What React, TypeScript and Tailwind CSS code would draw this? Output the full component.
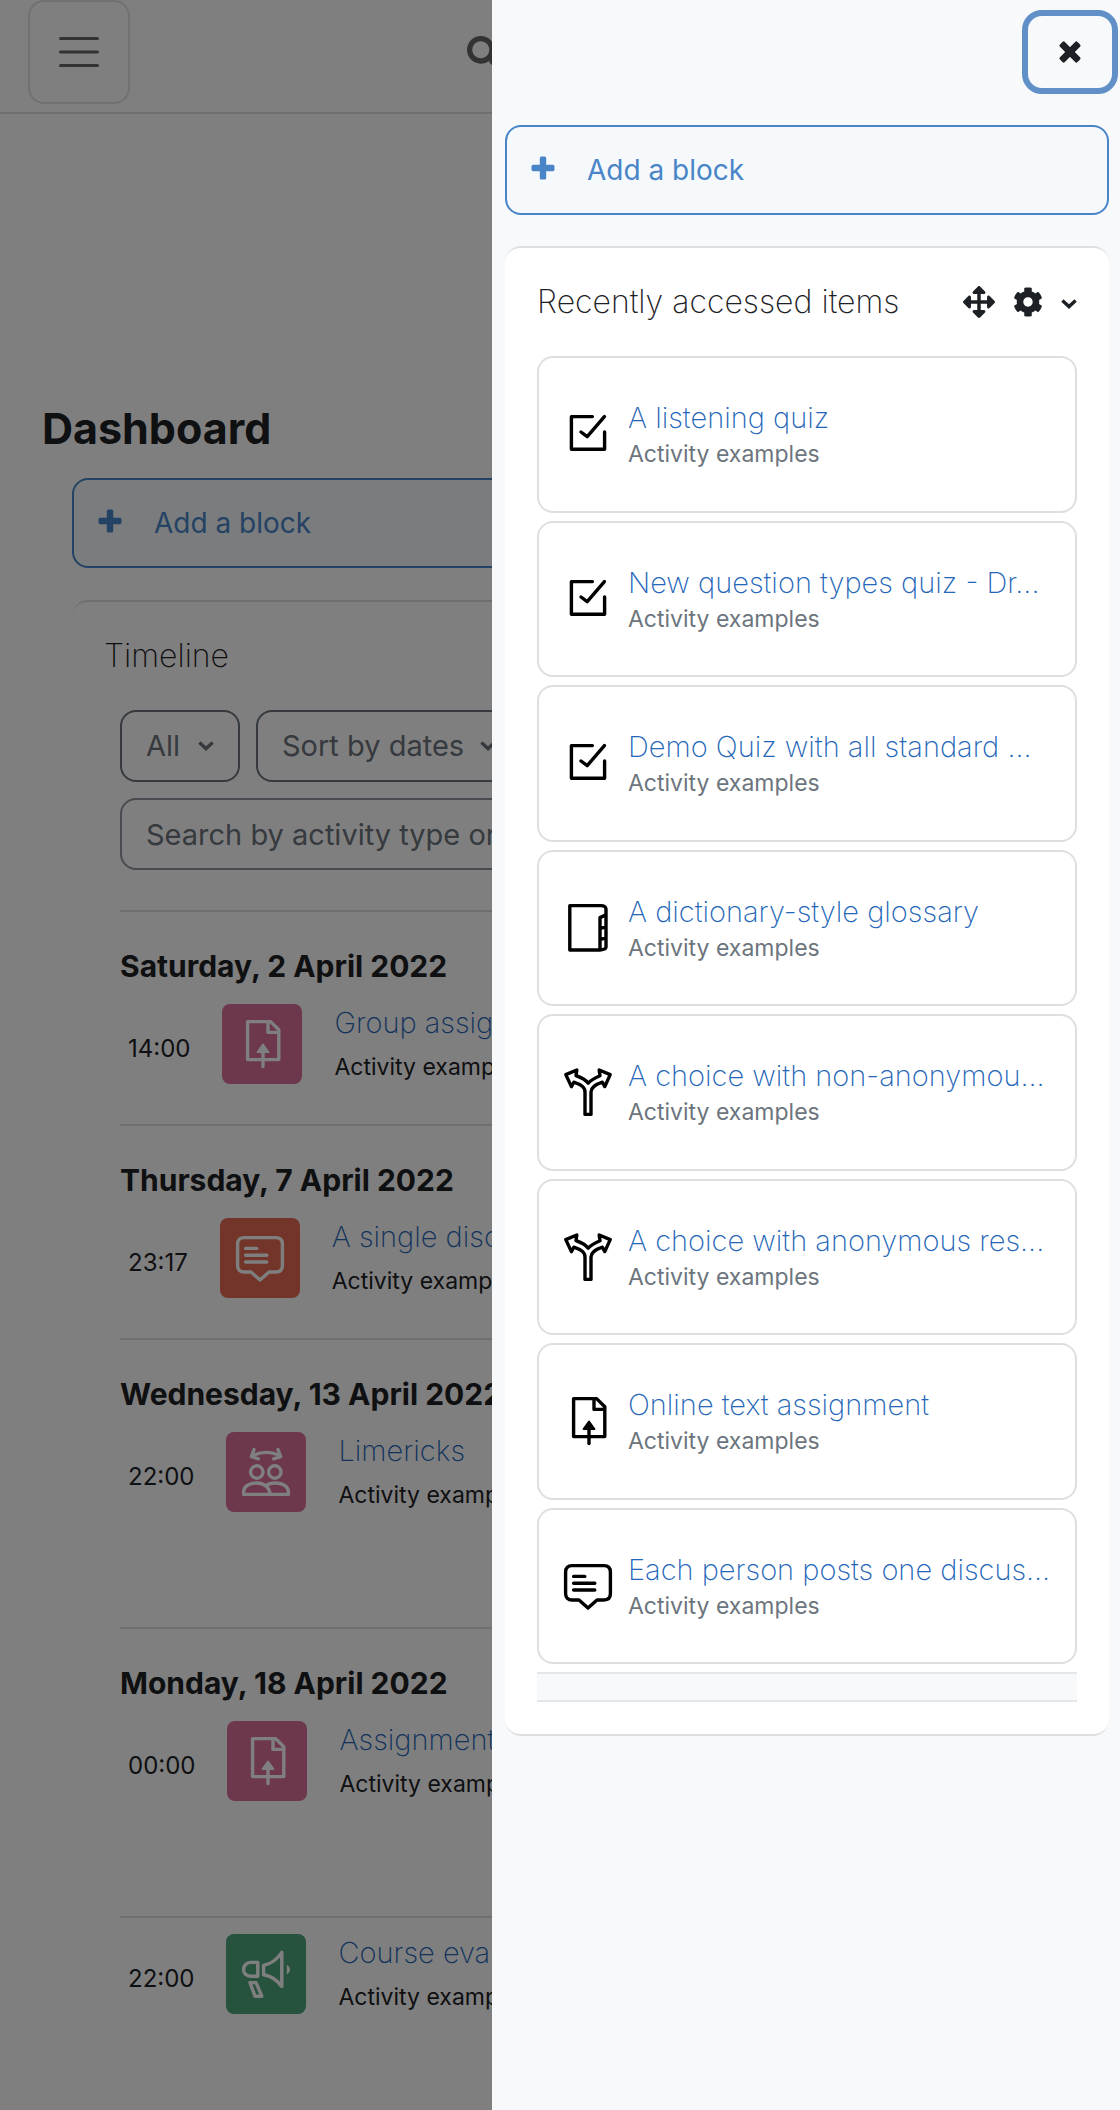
import type { ReactNode } from "react"
import { FaArrowsAlt, FaCog, FaSearch } from "react-icons/fa"

type IconName = "quiz" | "glossary" | "choice" | "assign" | "forum" | "workshop" | "feedback"

type TimelineEvent = {
    date?: string
    time: string
    icon: IconName
    tile: string
    name: string
    action?: boolean
}

const items: { icon: IconName, name: string }[] = [
    { icon: "quiz", name: "A listening quiz" },
    { icon: "quiz", name: "New question types quiz - Dr..." },
    { icon: "quiz", name: "Demo Quiz with all standard ..." },
    { icon: "glossary", name: "A dictionary-style glossary" },
    { icon: "choice", name: "A choice with non-anonymou..." },
    { icon: "choice", name: "A choice with anonymous res..." },
    { icon: "assign", name: "Online text assignment" },
    { icon: "forum", name: "Each person posts one discus..." },
]

const events: TimelineEvent[] = [
    { date: "Saturday, 2 April 2022", time: "14:00", icon: "assign", tile: "bg-[#da6e9c]", name: "Group assignment" },
    { date: "Thursday, 7 April 2022", time: "23:17", icon: "forum", tile: "bg-[#e66a54]", name: "A single discussion" },
    { date: "Wednesday, 13 April 2022", time: "22:00", icon: "workshop", tile: "bg-[#da6e9c]", name: "Limericks", action: true },
    { date: "Monday, 18 April 2022", time: "00:00", icon: "assign", tile: "bg-[#da6e9c]", name: "Assignment", action: true },
    { time: "22:00", icon: "feedback", tile: "bg-[#4ea47c]", name: "Course evaluation" },
]

const shapes: Record<IconName, ReactNode> = {
    quiz: (
        <path d="M14.2 3.3H3.7V19.6H20.3V11M8.5 11L11.6 13.3L20.2 3.3" />
    ),
    glossary: (
        <path d="M18 23H2.9V.8H18.5C20 .8 21 1.6 21 2.6V5.4L18 6.8V23C20 22.8 21 22.3 21 21.5V5.4M18 12.2L21 11.6M18 17.7L21 17.1" />
    ),
    choice: (
        <path d="M10.5 23.2V12C10.5 9.8 9 8.6 4.9 7.1L3.7 9.3L.9 3.3L6.4 1L6 3.8C9 4.9 11 6 12.1 7.6C13.5 6 15.5 5 18 3.9L17.6 1L23.1 3.3L20.4 9.3L19.2 7.1C15.2 8.6 13.6 9.8 13.5 12V23.2Z" />
    ),
    assign: (
        <>
            <path d="M4.8 .8H16.3L20.4 4.9V19.8H4.8ZM15 .8V6.2H20.4" />
            <path d="M12.5 12.3L15.2 16H9.8Z" fill="currentColor" strokeWidth="1" />
            <path d="M12.5 15V23.3" />
        </>
    ),
    forum: (
        <path d="M4 1.8H20C22 1.8 23.2 3 23.2 5V15.8C23.2 17.8 22 19 20 19H16.5L12 23L7.5 19H4C2 19 .8 17.8 .8 15.8V5C.8 3 2 1.8 4 1.8ZM4.8 7.2H10.4M4.8 10.6H15.4M4.8 14H15.4" />
    ),
    workshop: (
        <>
            <path d="M6 .8L4.7 4.3L8.2 5.4M4.9 4.2C9 1.5 15 1.5 19.1 4.2M18 .8L19.3 4.3L15.8 5.4" />
            <circle cx="7.4" cy="12" r="3.1" />
            <circle cx="16.4" cy="12" r="3.1" />
            <path d="M.8 23.2V22C.8 19.2 3.6 17.5 7.3 17.5S13.8 19.6 14 23.2ZM12 18.8C13.2 17.9 14.8 17.5 16.6 17.5C20.4 17.5 23.2 19.2 23.2 22V23.2H14" />
        </>
    ),
    feedback: (
        <>
            <path d="M7.9 6.2V13.1H4.3C2.2 13.1 .8 11.6 .8 9.7S2.2 6.2 4.3 6.2ZM10.8 7.7C14.5 7 17.8 4.4 19.9 1.2V18.3C17.8 15.4 14.5 13 10.8 12.4ZM4 16.3H7L9.9 23.1H6.5Z" />
            <path d="M22.4 7.2C23.5 8.2 24 9 24 9.8S23.5 11.4 22.4 12.3Z" fill="currentColor" stroke="none" />
        </>
    ),
}

function ActivityIcon({ name }: { name: IconName }) {
    return (
        <svg viewBox="0 0 24 24" className="size-12 shrink-0 overflow-visible" fill="none" stroke="currentColor" strokeWidth="1.7" strokeLinecap="round" strokeLinejoin="round" aria-hidden="true">
            {shapes[name]}
        </svg>
    )
}

function PlusIcon({ className }: { className: string }) {
    return (
        <svg viewBox="0 0 24 24" className={className} fill="currentColor" aria-hidden="true">
            <rect x=".5" y="8.8" width="23" height="6.4" rx="1.6" />
            <rect x="8.8" y=".5" width="6.4" height="23" rx="1.6" />
        </svg>
    )
}

function Chevron() {
    return (
        <svg viewBox="0 0 16 10" className="h-[10px] w-4 shrink-0" fill="none" stroke="currentColor" strokeWidth="3.4" aria-hidden="true">
            <path d="M1.4 1.6L8 7.6L14.6 1.6" />
        </svg>
    )
}

function AddBlock() {
    return (
        <a href="#" className="flex h-[90px] items-center gap-8 rounded-2xl border-2 border-[#4985c7] bg-[#f5f9fc] px-6 text-[28px] text-[#4985c7]">
            <PlusIcon className="-mt-1 size-6" />
            Add a block
        </a>
    )
}

function EventRow({ event }: { event: TimelineEvent }) {
    return (
        <div className={event.action ? "border-t-2 border-[#dedfe0] pb-[115px]" : "border-t-2 border-[#dedfe0] pb-10"}>
            {event.date
                ? <h3 className="pt-8 pb-4 text-[30px] leading-[44px] font-bold">{event.date}</h3>
                : <div className="h-4" />}
            <div className="flex h-20 items-center pl-2">
                <time className="pt-[10px] pr-8 text-[24px]">{event.time}</time>
                <span className={"flex size-20 shrink-0 items-center justify-center rounded-lg text-white " + event.tile}>
                    <ActivityIcon name={event.icon} />
                </span>
                <div className="flex flex-col gap-1 pt-[2px] pl-8 whitespace-nowrap">
                    <a href="#" className="text-[29px] leading-10 font-extralight text-[#2466b8]">{event.name}</a>
                    <span className="text-[23px] leading-10">Activity examples</span>
                </div>
            </div>
        </div>
    )
}

function DashboardPage() {
    return (
        <div className="flex min-h-screen flex-col bg-white">
            <header className="flex h-[114px] items-start justify-between border-b-2 border-[#dee0e2] px-7">
                <button aria-label="Side panel" className="flex h-[104px] w-[102px] items-center justify-center rounded-2xl border-2 border-[#e2e2e2] text-[#666]">
                    <svg viewBox="0 0 40 30" className="h-[30px] w-10" stroke="currentColor" strokeWidth="3" strokeLinecap="round" aria-hidden="true">
                        <path d="M1.5 1.6H38.5M1.5 15H38.5M1.5 28.4H38.5" />
                    </svg>
                </button>
                <button aria-label="Search" className="mr-[591px] flex h-[106px] items-center text-[#666]">
                    <FaSearch className="size-[34px]" />
                </button>
            </header>

            <main className="px-[42px] pt-[282px]">
                <h1 className="text-[43px] leading-[64px] font-bold">Dashboard</h1>
                <div className="px-[30px] pt-[18px]">
                    <AddBlock />
                    <section className="mt-8 rounded-t-2xl border-t-2 border-[#dedfe0] px-8 pt-8">
                        <h2 className="text-[32px] leading-[44px] font-extralight">Timeline</h2>
                        <div className="px-4 pt-8">
                            <div className="flex gap-4">
                                <button className="flex h-[72px] w-[120px] items-center justify-between rounded-2xl border-2 border-[#6c757d] px-6 text-[29px] text-[#6c757d]">
                                    All <Chevron />
                                </button>
                                <button className="flex h-[72px] items-center gap-4 rounded-2xl border-2 border-[#6c757d] px-6 text-[29px] whitespace-nowrap text-[#6c757d]">
                                    Sort by dates <Chevron />
                                </button>
                            </div>
                            <input
                                type="text"
                                aria-label="Search by activity type or name"
                                placeholder="Search by activity type or name"
                                className="mt-4 mb-10 block h-[72px] w-full rounded-2xl border-2 border-[#8f959e] px-6 text-[29px] placeholder:text-[#6c757d]"
                            />
                            {events.map((event, index) => (
                                <EventRow key={index} event={event} />
                            ))}
                        </div>
                    </section>
                </div>
            </main>
        </div>
    )
}

function BlocksDrawer() {
    return (
        <aside className="absolute inset-y-0 right-0 w-[628px] bg-[#f8f9fb] pr-[11px] pl-[13px]">
            <div className="-mr-[9px] flex justify-end pt-[10px]">
                <button aria-label="Close block drawer" className="flex h-[84px] w-24 items-center justify-center rounded-[20px] border-[6px] border-[#6190c9]">
                    <PlusIcon className="size-[26px] rotate-45" />
                </button>
            </div>

            <div className="pt-[31px]">
                <AddBlock />
            </div>

            <section className="mt-[31px] rounded-2xl border-y-2 border-[#dedfe0] bg-white px-8 pt-8 pb-8">
                <div className="flex h-[44px] items-center">
                    <h2 className="flex-1 text-[32px] leading-[44px] font-extralight">Recently accessed items</h2>
                    <div className="flex items-center gap-[18px]">
                        <button aria-label="Move block"><FaArrowsAlt className="size-8" /></button>
                        <button aria-label="Actions menu"><FaCog className="size-[30px]" /></button>
                        <button aria-label="Toggle block" className="pt-1"><Chevron /></button>
                    </div>
                </div>

                <div className="grid h-[1340px] auto-rows-fr gap-2 pt-8">
                    {items.map((item) => (
                        <div key={item.name} className="flex items-center gap-4 rounded-2xl border-2 border-[#dedfe0] px-[25px]">
                            <span className="text-black"><ActivityIcon name={item.icon} /></span>
                            <div className="flex min-w-0 flex-col pt-1 whitespace-nowrap">
                                <a href="#" className="text-[29px] leading-9 font-extralight text-[#2466b8]">{item.name}</a>
                                <span className="text-[23px] leading-9 text-[#6c757d]">Activity examples</span>
                            </div>
                        </div>
                    ))}
                </div>

                <div className="mt-2 h-[30px] border-y-2 border-[#e4e7ea] bg-[#f8f9fb]" />
            </section>
        </aside>
    )
}

export default function App() {
    return (
        <div className="relative overflow-hidden font-['Inter','Liberation_Sans',sans-serif] text-[#1d2125]">
            <DashboardPage />
            <div className="absolute inset-0 bg-black/50" />
            <BlocksDrawer />
        </div>
    )
}
